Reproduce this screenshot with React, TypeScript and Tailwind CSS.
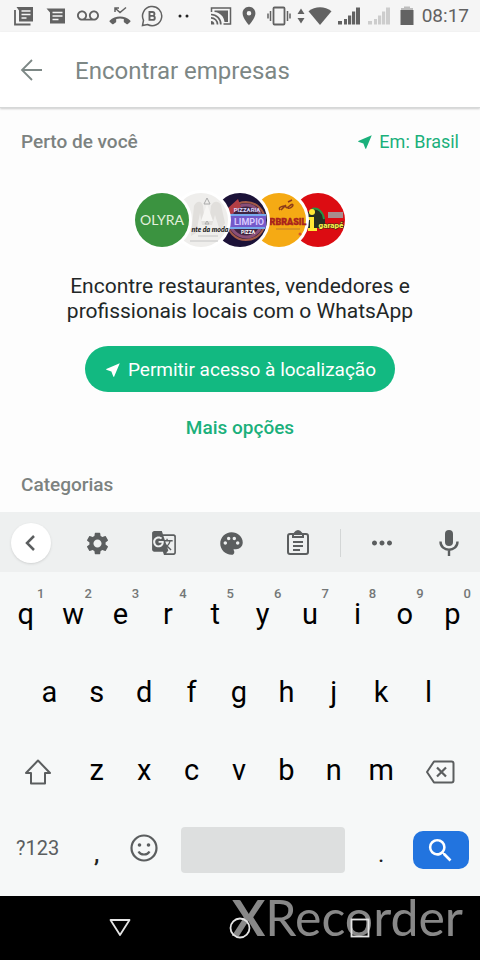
import type { ReactNode } from 'react';
import {
  MdGTranslate,
  MdLocationOn,
  MdMic,
  MdMoreHoriz,
  MdNearMe,
  MdPalette,
  MdSearch,
  MdSettings,
  MdVoicemail,
} from 'react-icons/md';

const ROW_ONE = ['q', 'w', 'e', 'r', 't', 'y', 'u', 'i', 'o', 'p'];
const ROW_TWO = ['a', 's', 'd', 'f', 'g', 'h', 'j', 'k', 'l'];
const ROW_THREE = ['z', 'x', 'c', 'v', 'b', 'n', 'm'];

function SignalBars({ className }: { className: string }) {
  return (
    <svg viewBox="0 0 22 18" className={`h-[18px] w-[22px] ${className}`} fill="currentColor" aria-hidden="true">
      <path d="M0 14h4v3.500H0zM6 12h3v5.500H6zM10 8.500h3.200v9H10zM14 4.500h3.200v13H14zM18 .5h4v17h-4z" />
    </svg>
  );
}

function StatusBar() {
  return (
    <div className="flex h-8 items-center justify-between bg-[#f5f5f5] pl-[13px] pr-[11px] text-[#626262]">
      <div className="flex items-center gap-[10px]">
        <svg viewBox="0 0 22 20" className="h-5 w-[22px]" fill="none" stroke="currentColor" aria-hidden="true">
          <path d="M2 4v14.500h15.500" strokeWidth="1.800" />
          <path d="M3.500 1H20v14.500H6V4.500z" fill="currentColor" stroke="none" />
          <path d="M8.500 5h9M8.500 8.500h9M8.500 12h5" stroke="#f5f5f5" strokeWidth="1.500" />
        </svg>
        <svg viewBox="0 0 22 20" className="h-5 w-[22px]" fill="none" aria-hidden="true">
          <path d="M1.500 2.500H20V17.500H5V6.500z" fill="currentColor" />
          <path d="M7.500 6.500h10M7.500 10h10M7.500 13.500h6" stroke="#f5f5f5" strokeWidth="1.500" />
        </svg>
        <MdVoicemail className="h-[22px] w-[22px]" />
        <svg viewBox="0 0 22 20" className="h-5 w-[22px]" fill="none" aria-hidden="true">
          <path d="M6 6V2h4M6.500 2.500L11 6.500l6-5" stroke="currentColor" strokeWidth="1.500" />
          <path d="M.8 14.500C6 9.300 16 9.300 21.200 14.500c.5.500.4 1-.1 1.500l-2.200 2.100c-.5.400-1 .3-1.500-.1l-2-1.500c-.4-.3-.6-.6-.6-1.100v-2.300c-2.500-.8-5-.8-7.600 0v2.300c0 .5-.2.8-.6 1.100l-2 1.500c-.5.400-1 .5-1.500.1L.9 16c-.5-.5-.6-1-.1-1.500z" fill="currentColor" />
        </svg>
        <svg viewBox="0 0 22 22" className="h-[22px] w-[22px]" fill="none" stroke="currentColor" aria-hidden="true">
          <path d="M1.500 20.500l1-5.200A9.600 9.600 0 1 1 6.500 19.500z" strokeWidth="1.500" />
          <path d="M8.500 7h3a1.900 1.900 0 0 1 0 3.900h-3zM8.500 10.900h3.300a2 2 0 0 1 0 4H8.500z" strokeWidth="1.900" />
        </svg>
        <svg viewBox="0 0 14 4" className="ml-1 h-1 w-[14px]" fill="#222" aria-hidden="true">
          <circle cx="3" cy="2" r="1.500" />
          <circle cx="10" cy="2" r="1.500" />
        </svg>
      </div>

      <div className="flex items-center">
        <svg viewBox="0 0 22 18" className="h-[18px] w-[22px]" fill="none" stroke="currentColor" aria-hidden="true">
          <path d="M1.500 5V1h19v16h-7" strokeWidth="1.500" />
          <path d="M4.500 3.500H18V15h-3.500C14 9.500 10 5.500 4.500 5z" fill="currentColor" stroke="none" />
          <path d="M1 7.500A9.800 9.800 0 0 1 10.800 17.500M1 10.800a6.500 6.500 0 0 1 6.500 6.700" strokeWidth="1.700" />
          <path d="M1 14a3.300 3.300 0 0 1 3.300 3.500H1z" fill="currentColor" stroke="none" />
        </svg>
        <MdLocationOn className="ml-[6px] h-[22px] w-[22px]" />
        <svg viewBox="0 0 24 20" className="ml-[7px] h-5 w-6" fill="none" stroke="currentColor" aria-hidden="true">
          <rect x="6.500" y="1.500" width="11" height="17" rx="1" strokeWidth="1.800" />
          <path d="M3.500 5v10M20.500 5v10M1 7.500v5M23 7.500v5" strokeWidth="1.500" />
        </svg>
        <svg viewBox="0 0 8 16" className="ml-[6px] h-4 w-2" fill="currentColor" aria-hidden="true">
          <path d="M4 .5l3.500 5.500h-7zM4 15.500l3.500-5.500h-7z" />
        </svg>
        <svg viewBox="0 0 24 18" className="ml-[3px] h-[18px] w-6" fill="currentColor" aria-hidden="true">
          <path d="M12 18L.5 4.200C7-1 17-1 23.500 4.200z" />
        </svg>
        <SignalBars className="ml-[6px]" />
        <SignalBars className="ml-2 text-[#cdcdcd]" />
        <svg viewBox="0 0 14 20" className="ml-[10px] h-5 w-[14px]" fill="currentColor" aria-hidden="true">
          <path d="M4 .5h6V2h3v2H1V2h3z" fill="#bdbdbd" />
          <path d="M.5 4h13v15H.5z" />
        </svg>
        <span className="ml-2 text-[19px] leading-8">08:17</span>
      </div>
    </div>
  );
}

function SearchHeader() {
  return (
    <header className="flex h-[76px] items-center border-b border-[#d6d8d8] bg-white pl-5 pr-4 shadow-[0_1px_2px_rgba(0,0,0,0.2)]">
      <button type="button" aria-label="Voltar" className="text-[#7d8886]">
        <svg viewBox="0 0 24 24" className="h-6 w-6" fill="none" stroke="currentColor" strokeWidth="1.800" aria-hidden="true">
          <path d="M22 12H2M12 2L2 12l10 10" />
        </svg>
      </button>
      <input
        type="text"
        aria-label="Encontrar empresas"
        placeholder="Encontrar empresas"
        className="ml-[31px] min-w-0 flex-1 bg-transparent pt-[2px] text-2xl text-[#333] outline-none placeholder:text-[#7d8785]"
      />
    </header>
  );
}

function Logo({ background, className, children }: { background: string; className: string; children: ReactNode }) {
  return (
    <svg viewBox="0 0 60 60" className={`relative h-[60px] w-[60px] shrink-0 ${className}`} aria-hidden="true">
      <circle cx="30" cy="30" r="30" fill="#fff" />
      <circle cx="30" cy="30" r="27" fill={background} />
      {children}
    </svg>
  );
}

function BusinessLogos() {
  return (
    <div className="flex justify-center">
      <Logo background="#3b9340" className="z-40">
        <text x="30" y="35" textAnchor="middle" fontSize="14" fill="#e2f0dc" fontFamily="Lato, sans-serif">OLYRA</text>
      </Logo>
      <Logo background="#efeeec" className="z-30 -ml-[21px]">
        <path d="M20 46l3-30c3-6 8-5 9 0l1 9 3-7 3 7 1-9c2-5 7-6 10-1l4 18-5 8-5-16-3 10H31l-2-12-4 20z" fill="#e1dfdc" />
        <path d="M36 14l-6 17h12z" fill="#f7f6f4" />
        <path d="M36 8l3 6h-6zM36 31l2 3h-4z" fill="none" stroke="#aaa" strokeWidth="1" />
        <text x="39" y="42" textAnchor="middle" fontSize="7" fontWeight="900" fontStyle="italic" fill="#222" fontFamily="Lato, sans-serif">nte da moda</text>
        <path d="M27 46h20M19 51h28" stroke="#c4c4c4" strokeWidth="1" />
      </Logo>
      <Logo background="#1c1238" className="z-20 -ml-[21px]">
        <circle cx="36" cy="31" r="19" fill="#3e2440" stroke="#a35a48" strokeWidth="2" />
        <circle cx="36" cy="31" r="16" fill="none" stroke="#8a4f78" strokeWidth="3" />
        <path d="M18 18l10-9 3 8-12 9z" fill="#b33e45" />
        <path d="M17 26h39v12H20z" fill="#7459c8" />
        <path d="M18 25h38M20 38h35" stroke="#77a9ec" strokeWidth="2" />
        <text x="37" y="22" textAnchor="middle" fontSize="6" fontWeight="700" fill="#d6d7ff" fontFamily="Roboto, sans-serif">PIZZARIA</text>
        <text x="39" y="35" textAnchor="middle" fontSize="9" fontWeight="700" fill="#d9c9ff" fontFamily="Roboto, sans-serif">LIMPIO</text>
        <text x="38" y="44" textAnchor="middle" fontSize="5" fontWeight="700" fill="#fff" fontFamily="Roboto, sans-serif">PIZZA</text>
      </Logo>
      <Logo background="#f5aa14" className="z-10 -ml-[21px]">
        <path d="M31 20c-3-3 5-5 6-3 1 3 6-5 7-2 0 2-4 4-5 3M32 20l5-5M39 12l4-2" fill="none" stroke="#8c3d1a" strokeWidth="1.500" />
        <text x="39" y="35" textAnchor="middle" fontSize="9" fontWeight="900" fill="#a9231c" stroke="#a9231c" strokeWidth=".4" fontFamily="Roboto, sans-serif">RBRASIL</text>
        <path d="M27 39h24" stroke="#cf8d25" strokeWidth="1.500" />
        <circle cx="51" cy="44" r="1.500" fill="#d8542b" />
      </Logo>
      <Logo background="#dc0c12" className="-ml-[21px]">
        <path d="M19 38V24c4-9 16-5 18 6v8H19z" fill="#263022" />
        <path d="M24 19c6-2 11 3 12 10" fill="none" stroke="#269445" strokeWidth="2" />
        <circle cx="24" cy="22" r="3" fill="#ffe934" />
        <path d="M20 27h6v11h3v3h-9v-3h2v-8h-2z" fill="#ffe934" />
        <path d="M40 22h15v6H40z" fill="#a78d8d" />
        <text x="43" y="38" textAnchor="middle" fontSize="8" fontWeight="900" fill="#f5e94b" stroke="#392a14" strokeWidth="1" paintOrder="stroke" fontFamily="Roboto, sans-serif">garapé</text>
      </Logo>
    </div>
  );
}

function NearbySection() {
  return (
    <main className="flex h-[404px] flex-col pt-5">
      <div className="flex items-center justify-between px-[21px] leading-7">
        <h2 className="text-[19px] font-medium text-[#7c8280]">Perto de você</h2>
        <button type="button" className="flex items-center gap-[5px] text-lg leading-7 text-[#1ab07b]">
          <MdNearMe className="h-[18px] w-[18px]" aria-hidden="true" />
          Em: Brasil
        </button>
      </div>
      <div className="mt-[34px]">
        <BusinessLogos />
      </div>
      <p className="mx-auto mt-6 max-w-[380px] text-center text-[21px] leading-[25px] text-[#222727]">
        Encontre restaurantes, vendedores e profissionais locais com o WhatsApp
      </p>
      <button
        type="button"
        className="mx-auto mt-[22px] flex h-[46px] shrink-0 items-center gap-[6px] rounded-full bg-[#12b981] px-[19px] pt-[2px] text-[19px] text-white"
      >
        <MdNearMe className="h-[18px] w-[18px]" aria-hidden="true" />
        Permitir acesso à localização
      </button>
      <button type="button" className="mx-auto mt-[23px] text-[19px] leading-[26px] font-medium text-[#1ab07b]">
        Mais opções
      </button>
      <h2 className="mt-[30px] px-[21px] text-[19px] leading-7 font-medium text-[#7c8280]">Categorias</h2>
    </main>
  );
}

function ToolButton({ label, children }: { label: string; children: ReactNode }) {
  return (
    <button type="button" aria-label={label} className="flex h-10 w-10 items-center justify-center">
      {children}
    </button>
  );
}

function KeyboardToolbar() {
  return (
    <div className="flex h-[60px] items-center justify-between bg-[#eef0f0] px-[11px] pt-[2px] text-[#5b5e5f]">
      <button type="button" aria-label="Fechar barra" className="flex h-10 w-10 items-center justify-center rounded-full bg-white shadow-sm">
        <svg viewBox="0 0 24 24" className="h-6 w-6" fill="none" stroke="currentColor" strokeWidth="2.500" aria-hidden="true">
          <path d="M15 5l-7 7 7 7" />
        </svg>
      </button>
      <ToolButton label="Configurações">
        <MdSettings className="h-[27px] w-[27px]" />
      </ToolButton>
      <ToolButton label="Traduzir">
        <MdGTranslate className="h-[26px] w-[26px]" />
      </ToolButton>
      <ToolButton label="Temas">
        <MdPalette className="h-[27px] w-[27px]" />
      </ToolButton>
      <ToolButton label="Área de transferência">
        <svg viewBox="0 0 24 26" className="h-[26px] w-6" fill="none" stroke="currentColor" strokeWidth="2" aria-hidden="true">
          <rect x="2" y="4" width="20" height="20" rx="2" />
          <path d="M7 4v3h10V4" />
          <path d="M8 4c1 0 1-3 4-3s3 3 4 3z" fill="currentColor" />
          <path d="M7 12h10M7 16h10M7 20h7" strokeWidth="1.800" />
        </svg>
      </ToolButton>
      <span className="-mx-[5px] h-7 w-px bg-[#d3d6d6]" />
      <ToolButton label="Mais">
        <MdMoreHoriz className="h-[30px] w-[30px]" />
      </ToolButton>
      <ToolButton label="Entrada por voz">
        <svg viewBox="0 0 24 30" className="h-[30px] w-6" fill="none" stroke="currentColor" strokeWidth="2.400" aria-hidden="true">
          <rect x="8" y="2" width="8" height="16" rx="4" fill="currentColor" stroke="none" />
          <path d="M3.500 13.500c0 11 17 11 17 0M12 21.500V28" />
        </svg>
      </ToolButton>
    </div>
  );
}

function LetterKey({ letter, hint }: { letter: string; hint?: number }) {
  return (
    <button type="button" className="relative col-span-2 h-full text-[29px] leading-[78px] text-black">
      {letter}
      {hint !== undefined && (
        <span className="absolute top-[11px] right-[5px] text-[13px] leading-4 font-medium text-[#747777]">{hint}</span>
      )}
    </button>
  );
}

function Keyboard() {
  return (
    <section aria-label="Teclado" className="bg-[#f6f8f8]">
      <KeyboardToolbar />
      <div className="grid grid-cols-20 auto-rows-[78px] pt-[3px] pr-1 pb-[9px] pl-[2px]">
        {ROW_ONE.map((letter, i) => (
          <LetterKey key={letter} letter={letter} hint={(i + 1) % 10} />
        ))}

        <span />
        {ROW_TWO.map(letter => (
          <LetterKey key={letter} letter={letter} />
        ))}
        <span />

        <button type="button" aria-label="Maiúsculas" className="col-span-3 flex items-center justify-center pt-[3px] text-[#5b5e5f]">
          <svg viewBox="0 0 28 28" className="h-7 w-7" fill="none" stroke="currentColor" strokeWidth="2" strokeLinejoin="round" aria-hidden="true">
            <path d="M14 2.500L26 15h-5v10.500H7V15H2z" />
          </svg>
        </button>
        {ROW_THREE.map(letter => (
          <LetterKey key={letter} letter={letter} />
        ))}
        <button type="button" aria-label="Apagar" className="col-span-3 flex items-center justify-center pt-[3px] text-[#5b5e5f]">
          <svg viewBox="0 0 30 24" className="h-6 w-[30px]" fill="none" stroke="currentColor" strokeWidth="2" strokeLinejoin="round" aria-hidden="true">
            <path d="M9 1.500h17.500a2 2 0 0 1 2 2v17a2 2 0 0 1-2 2H9L2 12z" />
            <path d="M12 7.500l9 9M21 7.500l-9 9" strokeWidth="2.200" />
          </svg>
        </button>

        <button type="button" className="col-span-3 text-xl leading-[76px] text-[#5b5e5f]">?123</button>
        <button type="button" className="col-span-2 pt-3 text-2xl leading-[66px] font-medium text-[#222]">,</button>
        <button type="button" aria-label="Emoji" className="col-span-2 flex items-center justify-center text-[#5b5e5f]">
          <svg viewBox="0 0 28 28" className="h-7 w-7" fill="none" stroke="currentColor" strokeWidth="2.200" aria-hidden="true">
            <circle cx="14" cy="14" r="12.500" />
            <path d="M8.500 17.500c2 4 9 4 11 0" />
            <circle cx="9.500" cy="11" r="1.800" fill="currentColor" stroke="none" />
            <circle cx="18.500" cy="11" r="1.800" fill="currentColor" stroke="none" />
          </svg>
        </button>
        <div className="col-span-8 flex items-center px-[13px] pt-1">
          <button type="button" aria-label="Espaço" className="h-[46px] w-full rounded bg-[#dddfdf]" />
        </div>
        <button type="button" className="col-span-2 pt-3 text-2xl leading-[66px] text-[#222]">.</button>
        <div className="col-span-3 flex items-center pt-1 pr-[7px] pl-2">
          <button type="button" aria-label="Pesquisar" className="flex h-[38px] w-full items-center justify-center rounded-[10px] bg-[#2274df] text-white">
            <MdSearch className="h-[31px] w-[31px]" />
          </button>
        </div>
      </div>
    </section>
  );
}

function NavigationBar() {
  return (
    <nav className="relative flex h-16 items-center justify-around bg-black px-15">
      <div className="absolute top-0 right-[17px] font-['Lato',sans-serif] text-[50px] leading-[42px] text-[#888]">
        <span className="font-bold">X</span>Recorder
      </div>
      <button type="button" aria-label="Voltar" className="relative text-[#e4e4e4]">
        <svg viewBox="0 0 22 22" className="h-[22px] w-[22px]" fill="none" stroke="currentColor" strokeWidth="1.800" aria-hidden="true">
          <path d="M1.500 3h19L11 18z" strokeLinejoin="round" />
        </svg>
      </button>
      <button type="button" aria-label="Início" className="relative text-[#e4e4e4]">
        <svg viewBox="0 0 22 22" className="h-[22px] w-[22px]" fill="none" stroke="currentColor" strokeWidth="1.800" aria-hidden="true">
          <circle cx="11" cy="11" r="9.500" />
        </svg>
      </button>
      <button type="button" aria-label="Recentes" className="relative text-[#e4e4e4]">
        <svg viewBox="0 0 22 22" className="h-[22px] w-[22px]" fill="none" stroke="currentColor" strokeWidth="1.800" aria-hidden="true">
          <rect x="2.500" y="2.500" width="17" height="17" />
        </svg>
      </button>
    </nav>
  );
}

export function App() {
  return (
    <div className="flex min-h-screen flex-col bg-[#fdfdfd] font-['Roboto',sans-serif]">
      <StatusBar />
      <SearchHeader />
      <NearbySection />
      <Keyboard />
      <NavigationBar />
    </div>
  );
}

export default App;
